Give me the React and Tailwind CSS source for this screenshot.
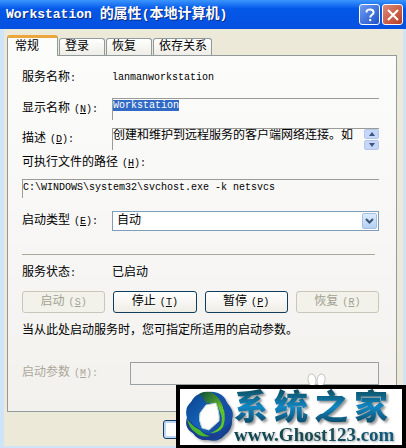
import React, { useEffect, useRef } from "react";
import { clsx } from "clsx";

const tabs = ["常规", "登录", "恢复", "依存关系"];

const actions = [
  { label: "启动", mnemonic: "S", disabled: true },
  { label: "停止", mnemonic: "T", disabled: false },
  { label: "暂停", mnemonic: "P", disabled: false },
  { label: "恢复", mnemonic: "R", disabled: true },
];

function Mnemonic({ letter, colon }) {
  return (
    <span className="ml-1 text-[10px]">
      (<span className="underline underline-offset-1">{letter}</span>){colon && ":"}
    </span>
  );
}

function Label({ htmlFor, letter, className, children }) {
  return (
    <label htmlFor={htmlFor} className={clsx("block shrink-0 whitespace-nowrap", className)}>
      {children}
      {letter ? <Mnemonic letter={letter} colon /> : <span className="text-[10px]">:</span>}
    </label>
  );
}

function TitleBar() {
  return (
    <header className="flex h-[29px] items-center bg-linear-to-b from-[#3a95ff] via-[#0458e8] via-30% to-[#0650e0] pl-[6px] pr-[3px] text-white">
      <h1 className="flex-1 text-[14px] leading-5 font-bold whitespace-nowrap text-shadow-[1px_1px_0_#0a2a80]">
        <span className="text-[13px]">Workstation </span>的属性
        <span className="text-[13px]">(</span>本地计算机<span className="text-[13px]">)</span>
      </h1>
      <div className="flex gap-[2px]">
        <button
          aria-label="帮助"
          className="flex h-[21px] w-[21px] items-center justify-center rounded-[3px] border border-white bg-linear-to-br from-[#6f9cf0] to-[#1f50c8]"
        >
          <svg viewBox="0 0 14 14" className="h-[14px] w-[14px]" fill="none" stroke="#fff" strokeWidth="2">
            <path d="M3.5 4.5C3.5 2 5 1.4 7 1.4s3.6.9 3.6 3c0 2.400-3.400 2.400-3.400 5" />
            <path d="M7.200 11v2.200" />
          </svg>
        </button>
        <button
          aria-label="关闭"
          className="flex h-[21px] w-[21px] items-center justify-center rounded-[3px] border border-white bg-linear-to-br from-[#dc8a78] to-[#b83a20]"
        >
          <svg viewBox="0 0 14 14" className="h-[14px] w-[14px]" stroke="#fff" strokeWidth="2">
            <path d="M2 2l10 10M12 2L2 12" />
          </svg>
        </button>
      </div>
    </header>
  );
}

function Tabs() {
  return (
    <div role="tablist" className="flex items-end gap-[1px]">
      {tabs.map((tab, i) => (
        <button
          key={tab}
          role="tab"
          aria-selected={i === 0}
          className={clsx(
            "rounded-t-[3px] border border-b-0 border-[#919b9c] whitespace-nowrap",
            i === 0
              ? "relative z-10 -mb-px h-[21px] border-t-[3px] border-t-[#eba63c] bg-[#fcfcfb] pr-[18px] pl-[7px]"
              : "h-[17px] bg-linear-to-b from-white to-[#eeede6] pr-[15px] pl-[5px] last:pr-1"
          )}
        >
          {tab}
        </button>
      ))}
    </div>
  );
}

function ScrollButton({ label, d }) {
  return (
    <button
      aria-label={label}
      className="flex h-[10px] w-[15px] items-center justify-center rounded-[2px] border border-[#b4c8ee] bg-[#c6d6f8]"
    >
      <svg viewBox="0 0 6 4" className="h-1 w-[6px]" fill="#3c5680">
        <path d={d} />
      </svg>
    </button>
  );
}

function SiteBadge() {
  return (
    <div className="absolute right-0 bottom-0 flex h-[64px] w-[230px] items-center border-4 border-black bg-white">
      <svg viewBox="-2 0 54 54" className="h-[54px] w-[54px] shrink-0 drop-shadow-[2px_2px_1px_#aaa]">
        <defs>
          <linearGradient id="ringBlue" x1="0" y1="0" x2="1" y2="1">
            <stop offset="0" stopColor="#0c3f86" />
            <stop offset="0.5" stopColor="#1466c0" />
            <stop offset="1" stopColor="#152c78" />
          </linearGradient>
          <linearGradient id="ringGreen" x1="0" y1="0" x2="1" y2="1">
            <stop offset="0" stopColor="#0b4a3c" />
            <stop offset="1" stopColor="#7cd422" />
          </linearGradient>
        </defs>
        <path
          d="M17 4Q27 0 36 3Q42 5 45 13Q53 21 50 29Q51 39 43 45Q36 53 26 50Q16 51 11 43Q2 38 5 28Q2 18 9 12Q12 6 17 4Z"
          fill="url(#ringBlue)"
        />
        <path d="M17 4Q23 0 31 3Q38 7 41 15L41 28L36 17Q31 12 24 13Q22 7 17 4Z" fill="url(#ringGreen)" />
        <path d="M31 3Q41 3 45 13Q51 19 50 29Q47 35 41 38Q45 28 41 17Q38 8 31 3Z" fill="#1650a4" />
        <path d="M5 28Q2 38 11 43Q16 51 27 50Q34 49 37 43Q26 47 19 40Q11 35 5 28Z" fill="#1c3c8c" />
        <path d="M5 29Q11 37 18 40Q22 45 28 46Q19 48 13 42Q7 38 5 29Z" fill="#46b830" />
        <path d="M38 20Q41 28 39 35Q35 41 28 43Q37 43 41 37Q44 29 42 20L36 12Z" fill="#5fc428" />
        <path d="M24 15L34 13Q38 24 37 31L27 40L20 38Q16 30 18 23Z" fill="#fff" stroke="#c4d0c4" strokeWidth="1" />
      </svg>
      <div className="flex-1 whitespace-nowrap">
        <p className="flex gap-[6px] bg-linear-to-b from-[#0d4e60] via-[#1187c4] to-[#0b4560] bg-clip-text pt-[2px] font-['Liberation_Serif','Noto_Sans_CJK_SC',serif] text-[34px] leading-[34px] font-black text-transparent drop-shadow-[2px_2px_1px_#999]">
          {["系", "统", "之", "家"].map((char) => (
            <span key={char}>{char}</span>
          ))}
        </p>
        <p className="bg-linear-to-r from-[#0b4552] via-[#1a4a50] to-[#0c5c86] bg-clip-text font-['Liberation_Serif',serif] text-[19px] leading-[20px] font-bold text-transparent drop-shadow-[1px_1px_1px_#aaa]">
          www.Ghost123.com
        </p>
      </div>
    </div>
  );
}

export default function App() {
  const nameRef = useRef(null);

  useEffect(() => {
    nameRef.current.focus();
    nameRef.current.select();
  }, []);

  const sunken = "border-t border-l border-[#9a9a98] bg-transparent outline-none";

  return (
    <div className="relative overflow-hidden bg-[#cfe4f8] font-['Liberation_Mono','Noto_Sans_CJK_SC',monospace] text-[12px] leading-4 text-black">
      <TitleBar />
      <main className="mr-[3px] ml-1 bg-[#ece9d8] pt-[6px] pr-[6px] pl-[3px]">
        <Tabs />
        <div className="border border-[#919b9c] bg-linear-to-b from-[#fcfcfb] to-[#f2f1ee] pt-[10px] pr-[17px] pb-[26px] pl-[14px]">
          <div className="flex h-6 items-center">
            <Label className="w-[90px]">服务名称</Label>
            <span className="text-[10px]">lanmanworkstation</span>
          </div>

          <div className="mt-2 flex h-[22px] items-center">
            <Label htmlFor="display-name" letter="N" className="w-[90px]">显示名称</Label>
            <input
              id="display-name"
              ref={nameRef}
              readOnly
              defaultValue="Workstation"
              className={clsx(sunken, "h-full min-w-0 flex-1 pb-2 text-[10px] selection:bg-[#316ac5] selection:text-white")}
            />
          </div>

          <div className="mt-2 flex h-[22px] items-center">
            <Label htmlFor="description" letter="D" className="w-[90px]">描述</Label>
            <div className={clsx(sunken, "flex h-full min-w-0 flex-1")}>
              <textarea
                id="description"
                readOnly
                rows={1}
                defaultValue="创建和维护到远程服务的客户端网络连接。如"
                className="h-4 min-w-0 flex-1 resize-none overflow-hidden leading-[14px] outline-none"
              />
              <div className="flex flex-col gap-[1px]">
                <ScrollButton label="向上" d="M3 0L6 4H0Z" />
                <ScrollButton label="向下" d="M0 0H6L3 4Z" />
              </div>
            </div>
          </div>

          <Label htmlFor="path" letter="H" className="mt-[5px]">可执行文件的路径</Label>
          <input
            id="path"
            readOnly
            defaultValue="C:\WINDOWS\system32\svchost.exe -k netsvcs"
            className={clsx(sunken, "mt-[7px] block h-[19px] w-full pb-1 text-[10px]")}
          />

          <div className="mt-[13px] flex h-5 items-center">
            <Label htmlFor="startup-type" letter="E" className="w-[90px]">启动类型</Label>
            <div className="relative h-full flex-1">
              <select
                id="startup-type"
                className="h-full w-full appearance-none border border-[#7f9db9] bg-white pl-1 outline-none"
              >
                <option>自动</option>
                <option>手动</option>
                <option>已禁用</option>
              </select>
              <span className="pointer-events-none absolute top-[2px] right-[2px] bottom-[2px] flex w-[15px] items-center justify-center rounded-[2px] border border-[#a4c0e4] bg-linear-to-b from-[#dcebfc] to-[#b4d0f4]">
                <svg viewBox="0 0 9 6" className="h-[6px] w-[9px]" fill="none" stroke="#3c5474" strokeWidth="2">
                  <path d="M1 1l3.500 3.500L8 1" />
                </svg>
              </span>
            </div>
          </div>

          <hr className="mt-[23px] mr-1 border-[#aca899]" />

          <div className="mt-[10px] flex h-4 items-center">
            <span className="w-[90px]">服务状态<span className="text-[10px]">:</span></span>
            <span>已启动</span>
          </div>

          <div className="mt-[10px] grid grid-cols-4 gap-2">
            {actions.map((action) => (
              <button
                key={action.mnemonic}
                disabled={action.disabled}
                className={clsx(
                  "h-[22px] rounded-[3px] border whitespace-nowrap",
                  action.disabled
                    ? "border-[#c9c7ba] bg-[#f3f2ea] text-[#a1a192]"
                    : "border-[#123c5c] bg-linear-to-b from-white to-[#eeede6]"
                )}
              >
                {action.label}
                <Mnemonic letter={action.mnemonic} />
              </button>
            ))}
          </div>

          <p className="mt-[10px] whitespace-nowrap">当从此处启动服务时，您可指定所适用的启动参数。</p>

          <div className="mt-[23px] flex h-[23px] items-center">
            <Label htmlFor="params" letter="M" className="w-[108px] text-[#aca899]">启动参数</Label>
            <input id="params" disabled className="h-full min-w-0 flex-1 border border-[#9a9fa2]" />
          </div>
        </div>

        <div className="flex h-[34px] items-center pl-[156px]">
          <button aria-label="确定" className="h-[19px] w-[75px] rounded-[3px] border border-[#123c5c] bg-white shadow-[inset_0_0_0_2px_#bcd4f6]" />
        </div>
      </main>
      <div className="h-[3px]" />

      <svg viewBox="0 0 24 14" className="absolute right-[77px] bottom-[62px] h-[14px] w-6" fill="#fff" stroke="#c4c4c0">
        <ellipse cx="7" cy="7" rx="4" ry="6" transform="rotate(-12 7 7)" />
        <ellipse cx="16" cy="7" rx="4" ry="6" transform="rotate(12 16 7)" />
      </svg>
      <SiteBadge />
    </div>
  );
}
